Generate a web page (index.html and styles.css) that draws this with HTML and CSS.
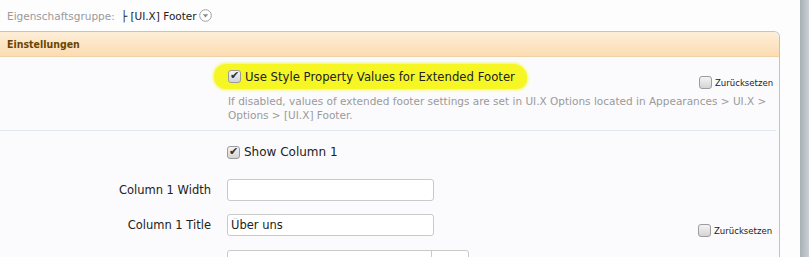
FILE: index.html
```html
<!DOCTYPE html>
<html lang="de">
<head>
    <meta charset="UTF-8">
    <title>Stil-Eigenschaften: [UI.X] Footer</title>
    <link rel="stylesheet" href="styles.css">
</head>
<body>

    <div class="window">
        <div class="content">
            <div class="group-line">
                <span class="group-label">Eigenschaftsgruppe:</span>
                <span class="group-value">├ [UI.X] Footer</span>
                <svg class="group-toggle" width="13" height="13" viewBox="0 0 13 13">
                    <circle cx="6.5" cy="6.5" r="5.8" fill="#fff" stroke="#a0a0a0"/>
                    <path d="M3.8 5.2 L9.2 5.2 L6.5 8.4 Z" fill="#8a8a8a"/>
                </svg>
            </div>

            <div class="section">
                <h3 class="section-head">Einstellungen</h3>

                <div class="row row-first">
                    <div class="row-label"></div>
                    <div class="row-control">
                        <label class="highlight">
                            <input type="checkbox" class="check" checked>
                            <span>Use Style Property Values for Extended Footer</span>
                        </label>
                    </div>
                    <label class="reset reset-first">
                        <input type="checkbox" class="check">
                        <span>Zurücksetzen</span>
                    </label>
                    <p class="hint">If disabled, values of extended footer settings are set in UI.X Options located in Appearances &gt; UI.X &gt; Options &gt; [UI.X] Footer.</p>
                </div>

                <div class="row row-check">
                    <div class="row-label"></div>
                    <div class="row-control">
                        <label class="check-label">
                            <input type="checkbox" class="check" checked>
                            <span>Show Column 1</span>
                        </label>
                    </div>
                </div>

                <div class="row">
                    <div class="row-label">Column 1 Width</div>
                    <div class="row-control">
                        <input type="text" class="text-input">
                    </div>
                </div>

                <div class="row">
                    <div class="row-label">Column 1 Title</div>
                    <div class="row-control">
                        <input type="text" class="text-input" value="Über uns">
                    </div>
                    <label class="reset">
                        <input type="checkbox" class="check">
                        <span>Zurücksetzen</span>
                    </label>
                </div>

                <div class="row">
                    <div class="row-label"></div>
                    <div class="row-control">
                        <div class="combo">
                            <input type="text" class="combo-input">
                            <span class="combo-btn"></span>
                        </div>
                    </div>
                </div>
            </div>
        </div>
        <div class="scroll-strip"></div>
    </div>

</body>
</html>
```

FILE: styles.css
```css
html, body {
    height: 100%;
}

body {
    margin: 0;
    font-family: "DejaVu Sans", Verdana, sans-serif;
    font-size: 12px;
    color: #222;
    background-color: #fdfdfe;
    overflow: hidden;
}

.window {
    display: flex;
    height: 257px;
}

.content {
    width: 780px;
}

.scroll-strip {
    margin-left: 20px;
    width: 9px;
    background: linear-gradient(to right, #a9b1b8, #c9cfd4);
}

/* top line */
.group-line {
    height: 31px;
    display: flex;
    align-items: center;
    padding-left: 7px;
    font-size: 10.5px;
}

.group-label {
    color: #9a9a9a;
    margin-right: 6px;
}

.group-value {
    color: #222;
}

.group-toggle {
    margin-left: 2px;
}

/* section */
.section {
    border-top: 1px solid #b9c7ce;
    border-right: 1px solid #a9cbd8;
    border-top-right-radius: 6px;
    background-color: #fbfbfd;
    height: 226px;
}

.section-head {
    margin: 0;
    height: 24px;
    line-height: 24px;
    padding-left: 7px;
    font-family: "DejaVu Sans Condensed", "DejaVu Sans", sans-serif;
    font-size: 10.5px;
    font-weight: bold;
    color: #6b4404;
    background: linear-gradient(#fdeed8, #fcdcb2);
    border-bottom: 1px solid #ecd2a6;
    border-top-right-radius: 5px;
}

.row {
    display: grid;
    grid-template-columns: 211px 1fr 81px;
    column-gap: 16px;
    align-items: start;
    padding-bottom: 13px;
}

.row-label {
    text-align: right;
    line-height: 22px;
    font-size: 11.5px;
}

.row-first {
    padding: 7px 0 8px;
    margin: 0 3px 0 0;
    border-bottom: 1px solid #dfe8ee;
    column-gap: 0;
    grid-template-columns: 214px 1fr 78px;
}

.row-check {
    padding: 13px 0 17px;
}

.row-control {
    min-width: 0;
}

/* checkboxes */
.check {
    appearance: none;
    -webkit-appearance: none;
    width: 13px;
    height: 13px;
    margin: 0 4px 0 0;
    border: 1px solid #9c9c9c;
    border-radius: 3px;
    background: linear-gradient(#f4f4f4, #d4d4d4);
    position: relative;
    vertical-align: middle;
    flex-shrink: 0;
}

.check:checked::after {
    content: "\2714";
    position: absolute;
    left: 1px;
    top: -2px;
    font-size: 11px;
    color: #333;
}

.highlight {
    display: inline-flex;
    align-items: center;
    height: 25px;
    padding: 0 12px 0 14px;
    background-color: #f6f625;
    border-radius: 12px 14px 10px 12px;
    box-shadow: 0 0 3px 1px #f6f65a;
    font-size: 11.7px;
}

.check-label {
    display: inline-flex;
    align-items: center;
    height: 16px;
}

.hint {
    grid-column: 2 / 4;
    margin: 5px 0 0 14px;
    font-size: 10.5px;
    line-height: 14px;
    color: #9a9a9a;
}

.reset {
    display: flex;
    align-items: center;
    font-family: "DejaVu Sans Condensed", "DejaVu Sans", sans-serif;
    font-size: 9.5px;
    margin-top: 10px;
    color: #222;
}

.reset .check {
    width: 13px;
    height: 13px;
    margin-right: 3px;
}

.reset-first {
    margin-top: 12px;
    margin-left: 1px;
}

/* inputs */
.text-input {
    box-sizing: border-box;
    width: 207px;
    height: 22px;
    border: 1px solid #c9c9c9;
    border-radius: 3px;
    background: #fff;
    padding: 1px 3px 0;
    font-family: "DejaVu Sans", Verdana, sans-serif;
    font-size: 11.5px;
    line-height: 18px;
    color: #222;
}

.combo {
    display: flex;
    width: 240px;
    height: 22px;
    border: 1px solid #c9c9c9;
    border-radius: 3px;
    background: #fff;
}

.combo-input {
    width: 199px;
    border: none;
    border-right: 1px solid #c9c9c9;
    background: transparent;
}

.combo-btn {
    flex: 1;
}
```
